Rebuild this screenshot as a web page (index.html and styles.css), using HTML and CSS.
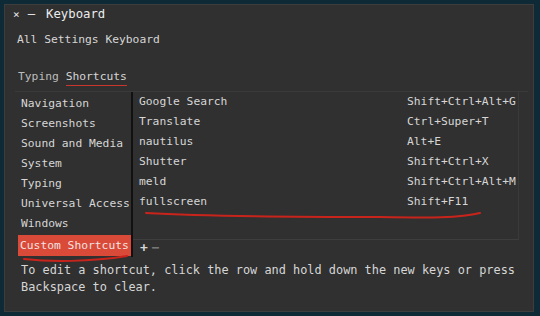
FILE: index.html
```html
<!DOCTYPE html>
<html lang="en">
<head>
    <meta charset="UTF-8">
    <title>Keyboard</title>
    <link rel="stylesheet" href="styles.css">
</head>
<body>
    <div id="win">
        <div class="title"><span class="close">×</span><span class="dash">–</span>Keyboard</div>
        <div class="crumbs">All Settings Keyboard</div>

        <div class="tabs">
            <span>Typing</span> <span class="tab-on">Shortcuts</span>
        </div>

        <div class="panel">
            <div class="body">
                <ul class="side">
                    <li>Navigation</li>
                    <li>Screenshots</li>
                    <li>Sound and Media</li>
                    <li>System</li>
                    <li>Typing</li>
                    <li>Universal Access</li>
                    <li>Windows</li>
                    <li class="sel">Custom Shortcuts</li>
                </ul>

                <div class="main">
                    <div class="list">
                        <div class="row"><span>Google Search</span><span class="key">Shift+Ctrl+Alt+G</span></div>
                        <div class="row"><span>Translate</span><span class="key">Ctrl+Super+T</span></div>
                        <div class="row"><span>nautilus</span><span class="key">Alt+E</span></div>
                        <div class="row"><span>Shutter</span><span class="key">Shift+Ctrl+X</span></div>
                        <div class="row"><span>meld</span><span class="key">Shift+Ctrl+Alt+M</span></div>
                        <div class="row"><span>fullscreen</span><span class="key">Shift+F11</span></div>
                    </div>
                    <div class="tools"><span class="plus">+</span><span class="minus">−</span></div>
                </div>
            </div>

            <p class="help">To edit a shortcut, click the row and hold down the new keys or press Backspace to clear.</p>
        </div>

        <!-- hand drawn marks -->
        <svg class="marks" width="540" height="316" viewBox="0 0 540 316">
            <path d="M146 213 C 200 216, 300 217, 380 217 C 430 218, 460 218, 480 213" />
            <path d="M24 259 C 50 262, 90 262, 127 256" />
        </svg>
    </div>
</body>
</html>
```

FILE: styles.css
```css
* {
    margin: 0;
    padding: 0;
    box-sizing: border-box;
}

body {
    width: 540px;
    height: 316px;
    background-color: #0e2a36;
    padding: 4px 6px 4px 4px;
    font-family: "DejaVu Sans Mono", monospace;
    font-size: 11.3px;
    color: #d6d6d6;
    overflow: hidden;
}

#win {
    height: 308px;
    background-color: #303030;
    border: 1px solid #3d3d3d;
    position: relative;
}

.title {
    height: 22px;
    padding: 2px 0 0 8px;
    font-size: 12.3px;
    color: #ececec;
}

.close {
    font-size: 11px;
}

.dash {
    margin: 0 11px 0 8px;
}

.crumbs {
    padding: 6px 0 0 12px;
    height: 42px;
}

.tabs {
    padding: 0 0 0 13px;
    height: 22px;
    line-height: 16px;
    color: #bdbdbd;
}

.tab-on {
    color: #d6d6d6;
    border-bottom: 1px solid #c9372c;
    padding-bottom: 2px;
}

.panel {
    margin: 0 5px 0 10px;
    border-top: 1px solid #3a3a3a;
    height: 212px;
}

.body {
    display: flex;
}

.side {
    list-style: none;
    width: 118px;
    padding: 2px 0 0 3px;
    border-right: 2px solid #111;
    height: 165px;
}

.side li {
    height: 20px;
    line-height: 20px;
    padding-left: 3px;
}

.side li.sel {
    margin-top: 1px;
    height: 21px;
    line-height: 21px;
    background-color: #d94a38;
    color: #f3e3e0;
    padding-left: 2px;
    width: 113px;
}

.main {
    flex: 1;
    margin-right: 9px;
}

.list {
    height: 148px;
    border-right: 1px solid #3a3a3a;
    border-bottom: 1px solid #3e3e3e;
}

.row {
    display: flex;
    justify-content: space-between;
    height: 20px;
    line-height: 20px;
    padding: 0 1px 0 6px;
}

.key {
    width: 110px;
}

.tools {
    height: 17px;
    padding: 0 0 0 7px;
    font-size: 13px;
    font-weight: bold;
    line-height: 16px;
}

.minus {
    margin-left: 4px;
    color: #777;
}

.help {
    padding: 5px 6px 0 6px;
    font-size: 11.9px;
    line-height: 17px;
}

.marks {
    position: absolute;
    left: -5px;
    top: -5px;
    pointer-events: none;
}

.marks path {
    fill: none;
    stroke: #c8241c;
    stroke-width: 2;
    stroke-linecap: round;
}
```
